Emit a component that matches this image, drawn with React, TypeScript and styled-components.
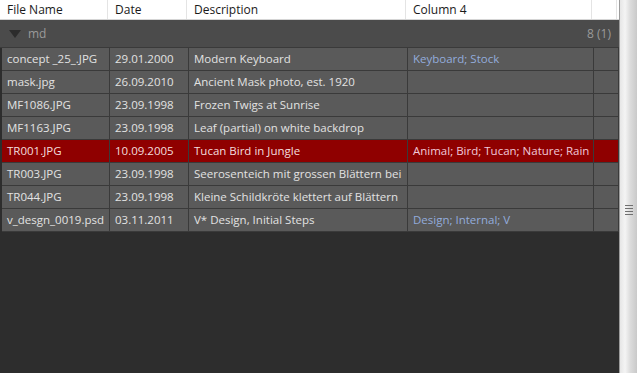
import React from "react";
import styled, { createGlobalStyle } from "styled-components";

const GlobalStyle = createGlobalStyle`
  html, body {
    margin: 0;
    padding: 0;
    background: #2d2d2d;
  }
  body {
    font-family: "Open Sans", "Noto Sans", sans-serif;
    font-size: 11.5px;
  }
`;

const COLS = "108px 79px 219px 186px 25px";

const Frame = styled.div`
  display: flex;
  width: 637px;
  height: 373px;
  overflow: hidden;
`;

const Grid = styled.div`
  flex: 1;
  display: flex;
  flex-direction: column;
  background: #2d2d2d;
`;

const Header = styled.div`
  display: grid;
  grid-template-columns: ${COLS} 1px;
  height: 19px;
  background: #ffffff;
  border-bottom: 1px solid #d5d5d5;
`;

const HeadCell = styled.div`
  padding-left: 7px;
  line-height: 19px;
  color: #1a1a1a;
  font-size: 12px;
  border-right: 1px solid #e4e4e4;
  white-space: nowrap;
  overflow: hidden;
`;

const Group = styled.div`
  display: flex;
  align-items: center;
  height: 27px;
  padding: 0 8px 0 9px;
  background: #4b4b4b;
  color: #9a9a9a;
  font-size: 12px;
  border-bottom: 1px solid #3a3a3a;
`;

const Arrow = styled.span`
  width: 0;
  height: 0;
  border-left: 6px solid transparent;
  border-right: 6px solid transparent;
  border-top: 8px solid #2c2c2c;
  margin-right: 7px;
  margin-top: 1px;
`;

const Count = styled.span`
  margin-left: auto;
`;

const Row = styled.div<{ $selected?: boolean }>`
  display: grid;
  grid-template-columns: ${COLS};
  height: 23px;
  margin-left: 2px;
  background: ${(p) => (p.$selected ? "#8f0000" : "#5a5a5a")};
  border-bottom: 1px solid #3a3a3a;
  box-sizing: border-box;
  color: ${(p) => (p.$selected ? "#f3dede" : "#e2e2e2")};
`;

const Cell = styled.div<{ $tag?: boolean; $selected?: boolean }>`
  padding-left: 5px;
  line-height: 22px;
  white-space: nowrap;
  overflow: hidden;
  border-right: 1px solid #3a3a3a;
  color: ${(p) => (p.$tag ? (p.$selected ? "#f0c8d8" : "#93acdc") : "inherit")};
`;

const Scroll = styled.div`
  width: 19px;
  position: relative;
  border-left: 1px solid #9c9c9c;
  background: linear-gradient(
    to right,
    #e6e6e6 0%,
    #f4f4f4 30%,
    #dcdcdc 60%,
    #c9c9c9 100%
  );
`;

const Grip = styled.div`
  position: absolute;
  left: 5px;
  top: 205px;
  width: 8px;
  display: flex;
  flex-direction: column;
  gap: 2px;

  span {
    height: 1px;
    background: #707070;
  }
`;

type Item = { name: string; date: string; desc: string; tags: string; selected?: boolean };

const items: Item[] = [
  { name: "concept _25_.JPG", date: "29.01.2000", desc: "Modern Keyboard", tags: "Keyboard; Stock" },
  { name: "mask.jpg", date: "26.09.2010", desc: "Ancient Mask photo, est. 1920", tags: "" },
  { name: "MF1086.JPG", date: "23.09.1998", desc: "Frozen Twigs at Sunrise", tags: "" },
  { name: "MF1163.JPG", date: "23.09.1998", desc: "Leaf (partial) on white backdrop", tags: "" },
  { name: "TR001.JPG", date: "10.09.2005", desc: "Tucan Bird in Jungle", tags: "Animal; Bird; Tucan; Nature; Rain", selected: true },
  { name: "TR003.JPG", date: "23.09.1998", desc: "Seerosenteich mit grossen Blättern bei", tags: "" },
  { name: "TR044.JPG", date: "23.09.1998", desc: "Kleine Schildkröte klettert auf Blättern", tags: "" },
  { name: "v_desgn_0019.psd", date: "03.11.2011", desc: "V* Design, Initial Steps", tags: "Design; Internal; V" },
];

const App: React.FC = () => {
  return (
    <>
      <GlobalStyle />
      <Frame>
        <Grid>
          <Header>
            <HeadCell>File Name</HeadCell>
            <HeadCell>Date</HeadCell>
            <HeadCell>Description</HeadCell>
            <HeadCell>Column 4</HeadCell>
            <HeadCell />
          </Header>
          <Group>
            <Arrow />
            md
            <Count>8 (1)</Count>
          </Group>
          {items.map((it) => (
            <Row key={it.name} $selected={it.selected}>
              <Cell>{it.name}</Cell>
              <Cell>{it.date}</Cell>
              <Cell>{it.desc}</Cell>
              <Cell $tag $selected={it.selected}>
                {it.tags}
              </Cell>
              <Cell />
            </Row>
          ))}
        </Grid>
        <Scroll>
          <Grip>
            <span />
            <span />
            <span />
            <span />
          </Grip>
        </Scroll>
      </Frame>
    </>
  );
};

export default App;
